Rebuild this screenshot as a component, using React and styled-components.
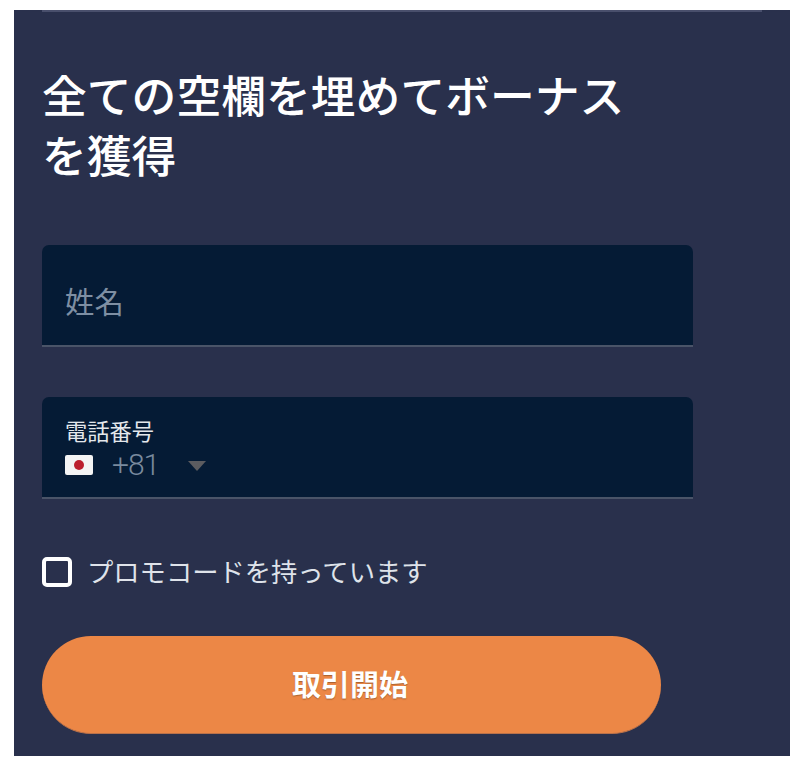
import styled, { createGlobalStyle } from 'styled-components';

const Global_Style = createGlobalStyle`
  html, body {
    margin: 0;
    padding: 0;
    background-color: #ffffff;
    height: 776px;
    overflow: hidden;
  }

  * {
    box-sizing: border-box;
  }
`;

const Page = styled.div`
  padding: 10px 0 20px 14px;
  width: 790px;
  height: 776px;
  font-family: 'Noto Sans CJK JP', 'Liberation Sans', sans-serif;
`;

const Panel = styled.form`
  background-color: #29304c;
  height: 746px;
  padding-left: 28px;
`;

const Top_Line = styled.div`
  width: 720px;
  height: 2px;
  background-color: #494f6c;
`;

const Title = styled.h1`
  margin: 52px 0 0 0;
  width: 600px;
  font-size: 44.8px;
  line-height: 60px;
  font-weight: 500;
  color: #ffffff;
`;

const Field = styled.div`
  display: flex;
  flex-direction: column;
  justify-content: ${(props) => (props.$compact ? 'flex-start' : 'center')};
  width: 651px;
  height: 102px;
  margin-top: ${(props) => props.$top}px;
  padding: ${(props) => (props.$compact ? '18px 0 0 23px' : '10px 0 0 23px')};
  background-color: #051b35;
  border-radius: 7px 7px 0 0;
  border-bottom: 2px solid #4a5468;
`;

const Placeholder = styled.span`
  font-size: 29.4px;
  line-height: 40px;
  color: #7e8fa3;
`;

const Field_Label = styled.label`
  font-size: 22.25px;
  line-height: 30px;
  color: #e4e8ec;
`;

const Phone_Row = styled.div`
  display: flex;
  align-items: center;
  height: 36px;
`;

const Flag = styled.svg`
  width: 28px;
  height: 20px;
  margin: 4px 19px 0 0;
`;

const Dial_Code = styled.span`
  margin-top: 4px;
  font-family: 'Roboto', 'Liberation Sans', sans-serif;
  font-size: 30px;
  font-weight: 300;
  letter-spacing: -1px;
  line-height: 36px;
  color: #7a8a9e;
`;

const Caret = styled.span`
  width: 0;
  height: 0;
  margin: 6px 0 0 29px;
  border-left: 9px solid transparent;
  border-right: 9px solid transparent;
  border-top: 10px solid #5c5c60;
`;

const Promo_Row = styled.div`
  display: flex;
  align-items: center;
  margin-top: 58px;
`;

const Check_Box = styled.span`
  width: 30px;
  height: 30px;
  margin-right: 15px;
  border: 4px solid #ffffff;
  border-radius: 5px;
`;

const Promo_Label = styled.label`
  padding-bottom: 2px;
  font-size: 26.3px;
  line-height: 28px;
  color: #dfe3ea;
`;

const Submit_Button = styled.button`
  display: block;
  width: 619px;
  height: 98px;
  margin-top: 49px;
  padding: 0 3px 4px 0;
  border: none;
  border-bottom: 1px solid #b9714a;
  border-radius: 49px;
  background-color: #ec8746;
  color: #ffffff;
  font-family: inherit;
  font-size: 29px;
  font-weight: 700;
  text-shadow: 0 1px 1px rgba(120, 70, 30, 0.6);
`;

export default function App() {
  return (
    <Page>
      <Global_Style />
      <Panel>
        <Top_Line />
        <Title>全ての空欄を埋めてボーナスを獲得</Title>

        <Field $top={61}>
          <Placeholder>姓名</Placeholder>
        </Field>

        <Field $top={50} $compact>
          <Field_Label>電話番号</Field_Label>
          <Phone_Row>
            <Flag viewBox="0 0 28 20">
              <rect width="28" height="20" rx="2" fill="#f4f4f4" />
              <circle cx="14" cy="10" r="5" fill="#bc1f2d" />
            </Flag>
            <Dial_Code>+81</Dial_Code>
            <Caret />
          </Phone_Row>
        </Field>

        <Promo_Row>
          <Check_Box />
          <Promo_Label>プロモコードを持っています</Promo_Label>
        </Promo_Row>

        <Submit_Button type="button">取引開始</Submit_Button>
      </Panel>
    </Page>
  );
}
